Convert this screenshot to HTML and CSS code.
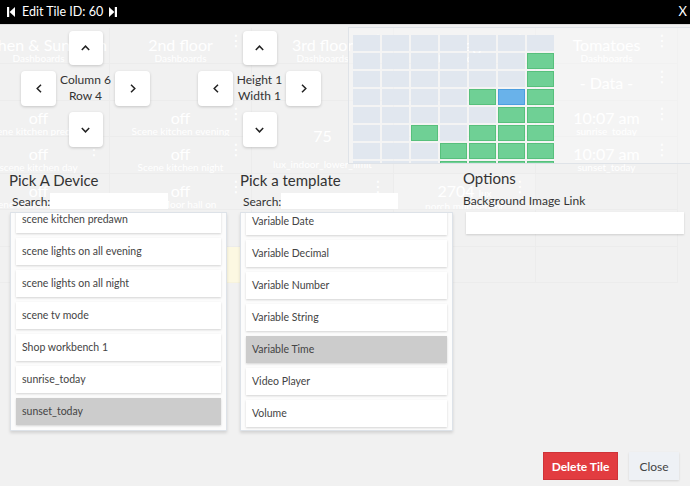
FILE: index.html
```html
<!DOCTYPE html>
<html lang="en">
<head>
<meta charset="utf-8">
<title>Edit Tile</title>
<link rel="stylesheet" href="styles.css">
</head>
<body>
<div class="stage">
  <div class="dash">
    <div class="tile"><div class="t-title">Kitchen &amp; Sunroom</div><div class="t-sub">Dashboards</div><span class="kebab">⋮</span></div>
    <div class="tile"><div class="t-title">2nd floor</div><div class="t-sub">Dashboards</div><span class="kebab">⋮</span></div>
    <div class="tile"><div class="t-title">3rd floor</div><div class="t-sub">Dashboards</div><span class="kebab">⋮</span></div>
    <div class="tile"><div class="t-title">Garage</div><div class="t-sub">Dashboards</div><span class="kebab">⋮</span></div>
    <div class="tile"><div class="t-title">Tomatoes</div><div class="t-sub">Dashboards</div><span class="kebab">⋮</span></div>

    <div class="tile"></div>
    <div class="tile"></div>
    <div class="tile"></div>
    <div class="tile"></div>
    <div class="tile tile-single"><div class="t-title">- Data -</div><span class="kebab">⋮</span></div>

    <div class="tile"><div class="t-title">off</div><div class="t-sub">scene kitchen predawn</div></div>
    <div class="tile"><div class="t-title">off</div><div class="t-sub">Scene kitchen evening</div><span class="kebab">⋮</span></div>
    <div class="tile tile-tall"><div class="t-title">75</div><div class="t-sub">lux_indoor_lower_limit</div></div>
    <div class="tile"></div>
    <div class="tile"><div class="t-title">10:07 am</div><div class="t-sub">sunrise_today</div><span class="kebab">⋮</span></div>

    <div class="tile"><div class="t-title">off</div><div class="t-sub">scene kitchen day</div><span class="kebab">⋮</span></div>
    <div class="tile"><div class="t-title">off</div><div class="t-sub">Scene kitchen night</div><span class="kebab">⋮</span></div>
    <div class="tile"></div>
    <div class="tile"><div class="t-title">10:07 am</div><div class="t-sub">sunset_today</div><span class="kebab">⋮</span></div>

    <div class="tile"><div class="t-title">off</div><div class="t-sub">scene kitchen morning</div></div>
    <div class="tile"><div class="t-title">off</div><div class="t-sub">2nd floor hall on</div><span class="kebab">⋮</span></div>
    <div class="tile"><span class="kebab">⋮</span></div>
    <div class="tile tile-light"><div class="t-title">2704 <small>lux</small></div><div class="t-sub">porch multisensor</div><span class="kebab">⋮</span></div>
    <div class="tile"></div>

    <div class="tile"></div>
    <div class="tile"></div>
    <div class="tile"></div>
    <div class="tile"></div>
    <div class="tile"></div>

    <div class="tile"></div>
    <div class="tile tile-yellow"></div>
    <div class="tile"></div>
    <div class="tile"></div>
    <div class="tile"></div>
  </div>

  <div class="modal">
    <header class="bar">
      <div class="bar-title">
        <svg class="nav-icon" width="8" height="10" viewBox="0 0 8 10"><rect x="0" y="0" width="2.2" height="10" fill="#fff"/><polygon points="8,0 2.6,5 8,10" fill="#fff"/></svg>
        <span>Edit Tile ID: 60</span>
        <svg class="nav-icon" width="8" height="10" viewBox="0 0 8 10"><polygon points="0,0 5.4,5 0,10" fill="#fff"/><rect x="5.8" y="0" width="2.2" height="10" fill="#fff"/></svg>
      </div>
      <span class="bar-close">X</span>
    </header>

    <section class="top">
      <div class="pad pad-pos">
        <button class="arrow a-up"><svg width="9" height="6" viewBox="0 0 9 6"><polyline points="0.8,5 4.5,1.2 8.2,5" fill="none" stroke="#222" stroke-width="1.5"/></svg></button>
        <button class="arrow a-left"><svg width="6" height="9" viewBox="0 0 6 9"><polyline points="5,0.8 1.2,4.5 5,8.2" fill="none" stroke="#222" stroke-width="1.5"/></svg></button>
        <div class="pad-label">Column 6<br>Row 4</div>
        <button class="arrow a-right"><svg width="6" height="9" viewBox="0 0 6 9"><polyline points="1,0.8 4.8,4.5 1,8.2" fill="none" stroke="#222" stroke-width="1.5"/></svg></button>
        <button class="arrow a-down"><svg width="9" height="6" viewBox="0 0 9 6"><polyline points="0.8,1 4.5,4.8 8.2,1" fill="none" stroke="#222" stroke-width="1.5"/></svg></button>
      </div>
      <div class="pad pad-size">
        <button class="arrow a-up"><svg width="9" height="6" viewBox="0 0 9 6"><polyline points="0.8,5 4.5,1.2 8.2,5" fill="none" stroke="#222" stroke-width="1.5"/></svg></button>
        <button class="arrow a-left"><svg width="6" height="9" viewBox="0 0 6 9"><polyline points="5,0.8 1.2,4.5 5,8.2" fill="none" stroke="#222" stroke-width="1.5"/></svg></button>
        <div class="pad-label">Height 1<br>Width 1</div>
        <button class="arrow a-right"><svg width="6" height="9" viewBox="0 0 6 9"><polyline points="1,0.8 4.8,4.5 1,8.2" fill="none" stroke="#222" stroke-width="1.5"/></svg></button>
        <button class="arrow a-down"><svg width="9" height="6" viewBox="0 0 9 6"><polyline points="0.8,1 4.5,4.8 8.2,1" fill="none" stroke="#222" stroke-width="1.5"/></svg></button>
      </div>
      <div class="grid-panel">
        <div class="cells">
          <i class="c"></i><i class="c"></i><i class="c"></i><i class="c"></i><i class="c"></i><i class="c"></i><i class="c"></i>
          <i class="c"></i><i class="c"></i><i class="c"></i><i class="c"></i><i class="c"></i><i class="c"></i><i class="c g"></i>
          <i class="c"></i><i class="c"></i><i class="c"></i><i class="c"></i><i class="c"></i><i class="c"></i><i class="c g"></i>
          <i class="c"></i><i class="c"></i><i class="c"></i><i class="c"></i><i class="c g"></i><i class="c b"></i><i class="c g"></i>
          <i class="c"></i><i class="c"></i><i class="c"></i><i class="c"></i><i class="c"></i><i class="c g"></i><i class="c g"></i>
          <i class="c"></i><i class="c"></i><i class="c g"></i><i class="c"></i><i class="c g"></i><i class="c g"></i><i class="c g"></i>
          <i class="c"></i><i class="c"></i><i class="c"></i><i class="c g"></i><i class="c g"></i><i class="c g"></i><i class="c g"></i>
          <i class="c"></i><i class="c"></i><i class="c"></i><i class="c g"></i><i class="c g"></i><i class="c g"></i><i class="c g"></i>
        </div>
      </div>
    </section>

    <section class="pickers">
      <div class="col col-device">
        <h2 class="col-title">Pick A Device</h2>
        <label class="search"><span class="search-label">Search:</span><input class="search-input" type="text"></label>
        <div class="panel">
          <ul class="list list-device">
            <li class="item">scene kitchen predawn</li>
            <li class="item">scene lights on all evening</li>
            <li class="item">scene lights on all night</li>
            <li class="item">scene tv mode</li>
            <li class="item">Shop workbench 1</li>
            <li class="item">sunrise_today</li>
            <li class="item item-selected">sunset_today</li>
          </ul>
        </div>
      </div>
      <div class="col col-template">
        <h2 class="col-title">Pick a template</h2>
        <label class="search"><span class="search-label">Search:</span><input class="search-input" type="text"></label>
        <div class="panel">
          <ul class="list list-template">
            <li class="item">Variable Date</li>
            <li class="item">Variable Decimal</li>
            <li class="item">Variable Number</li>
            <li class="item">Variable String</li>
            <li class="item item-selected">Variable Time</li>
            <li class="item">Video Player</li>
            <li class="item">Volume</li>
          </ul>
        </div>
      </div>
      <div class="col col-options">
        <h2 class="col-title col-title-options">Options</h2>
        <div class="opt-label">Background Image Link</div>
        <input class="opt-input" type="text">
      </div>
    </section>

    <footer class="foot">
      <button class="btn btn-delete">Delete Tile</button>
      <button class="btn btn-close">Close</button>
    </footer>
  </div>
</div>
</body>
</html>
```

FILE: styles.css
```css
* { box-sizing: border-box; }

html, body {
  margin: 0;
  padding: 0;
}

body {
  width: 690px;
  height: 486px;
  overflow: hidden;
  background: #f1f1f1;
  font-family: "Lato", "Noto Sans", sans-serif;
  color: #333;
}

.stage {
  display: grid;
  grid-template-columns: 690px;
  grid-template-rows: 486px;
  width: 690px;
  height: 486px;
  overflow: hidden;
}

.dash, .modal {
  grid-area: 1 / 1;
  min-width: 0;
}

/* ---------- faded dashboard behind the dialog ---------- */
.dash {
  display: grid;
  grid-template-columns: repeat(5, 142px);
  grid-auto-rows: 36.5px;
  margin-left: -32px;
  padding-top: 27.5px;
  width: 740px;
  align-content: start;
}

.tile {
  position: relative;
  text-align: center;
  color: #fff;
  padding-top: 8px;
  border-right: 1px solid rgba(0, 0, 0, 0.018);
  border-bottom: 1px solid rgba(0, 0, 0, 0.018);
  white-space: nowrap;
  overflow: hidden;
}

.tile-single { padding-top: 10px; }
.tile-tall { grid-row: span 2; padding-top: 26px; }
.tile-tall .t-sub { margin-top: 13px; }
.tile-light { background: rgba(255, 255, 255, 0.18); }
.tile-yellow { background: #fcf8e2; }

.t-title {
  font-size: 16px;
  line-height: 18px;
}

.t-title small { font-size: 10px; }

.t-sub {
  font-size: 10px;
  line-height: 12px;
  margin-top: -2px;
}

.kebab {
  position: absolute;
  right: 7px;
  top: 4px;
  font-size: 16px;
  line-height: 18px;
  font-family: "DejaVu Sans", sans-serif;
  color: #fff;
}

/* ---------- dialog ---------- */
.modal {
  position: relative;
  z-index: 1;
  display: flex;
  flex-direction: column;
  width: 690px;
  height: 486px;
}

.bar {
  height: 25px;
  background: #000;
  border-bottom: 1px solid #dcdcdc;
  display: flex;
  align-items: center;
  justify-content: space-between;
  padding: 0 3px 2px 7px;
  color: #fff;
}

.bar-title {
  display: flex;
  align-items: center;
  font-size: 12.5px;
}

.bar-title span { margin: 0 6px 0 7px; }

.nav-icon { display: block; margin-top: 1px; }

.bar-close {
  font-size: 13px;
}

/* top row: position / size pads and the grid */
.top {
  display: flex;
  align-items: flex-start;
  height: 139px;
  padding-left: 21px;
}

.pad {
  display: grid;
  grid-template-rows: 34px 35px 35px;
  row-gap: 6px;
  margin-top: 6px;
}

.pad-pos { grid-template-columns: 35px 59px 35px; }
.pad-size { grid-template-columns: 35px 53px 35px; margin-left: 48px; }

.arrow {
  display: flex;
  align-items: center;
  justify-content: center;
  border: none;
  padding: 0;
  background: #fff;
  border-radius: 4px;
  box-shadow: 0 1px 3px rgba(0, 0, 0, 0.18);
  width: 35px;
  height: 35px;
}

.a-up { grid-column: 2; grid-row: 1; justify-self: center; width: 34px; height: 34px; }
.a-left { grid-column: 1; grid-row: 2; }
.a-right { grid-column: 3; grid-row: 2; }
.a-down { grid-column: 2; grid-row: 3; justify-self: center; width: 34px; }

.pad-label {
  grid-column: 2;
  grid-row: 2;
  text-align: center;
  font-size: 12px;
  line-height: 16px;
  padding-top: 1px;
  color: #333;
  white-space: nowrap;
  justify-self: center;
}

.grid-panel {
  flex: 1;
  margin-left: 27px;
  margin-top: 2px;
  height: 137px;
  border: 1px solid #dfe3e8;
  border-right: none;
  background: rgba(255, 255, 255, 0.25);
  padding: 7px 0 0 4px;
  overflow: hidden;
}

.cells {
  display: grid;
  grid-template-columns: repeat(7, 27px);
  grid-auto-rows: 16px;
  gap: 2px;
}

.c {
  display: block;
  background: #e1e7ef;
}

.c.g {
  background: #6fd095;
  border: 1px solid #57c07c;
}

.c.b {
  background: #69b2ea;
  border: 1px solid #4c9ee0;
}

/* pickers */
.pickers {
  display: flex;
  align-items: flex-start;
  padding-left: 9px;
}

.col { display: flex; flex-direction: column; }
.col-device { width: 218px; }
.col-template { width: 213px; margin-left: 13px; }
.col-options { width: 221px; margin-left: 10px; }

.col-title {
  margin: 7px 0 0;
  font-size: 15px;
  line-height: 18px;
  font-weight: 400;
  color: #333;
}

.col-title-options { margin-top: 5px; }

.search {
  display: flex;
  align-items: center;
  margin: 4px 0 0 3px;
  height: 16px;
  font-size: 12px;
  color: #333;
}

.search-label { width: 35px; white-space: nowrap; }

.search-input {
  margin-left: 3px;
  height: 16px;
  border: none;
  background: #fff;
  padding: 0;
}

.col-device .search-input { width: 118px; }
.col-template .search-input { width: 117px; }

.panel {
  margin-top: 3px;
  height: 219px;
  border: 1px solid #dde2e8;
  background: #fcfcfc;
  box-shadow: 0 2px 3px rgba(0, 0, 0, 0.13);
  padding: 0 5px;
  overflow: hidden;
}

.col-device .panel { margin-left: 1px; }

.list {
  list-style: none;
  margin: 0;
  padding: 0;
  display: flex;
  flex-direction: column;
  gap: 5px;
}

.list-device { margin-top: -7px; }
.list-template { margin-top: -5px; }

.item {
  height: 27px;
  line-height: 27px;
  padding-left: 6px;
  background: #fff;
  box-shadow: 0 1px 2px rgba(0, 0, 0, 0.16);
  font-size: 10.5px;
  color: #444;
  white-space: nowrap;
}

.item-selected { background: #cccccc; }

.opt-label {
  margin-top: 7px;
  font-size: 12px;
  line-height: 14px;
  color: #333;
}

.opt-input {
  margin: 4px 0 0 3px;
  width: 218px;
  height: 22px;
  border: none;
  background: #fff;
  box-shadow: 0 1px 2px rgba(0, 0, 0, 0.15);
  padding: 0;
}

/* footer */
.foot {
  margin-top: auto;
  display: flex;
  justify-content: flex-end;
  gap: 11px;
  padding: 0 11px 6px 0;
}

.btn {
  height: 28px;
  border: none;
  font-family: "Lato", "Noto Sans", sans-serif;
  font-size: 12px;
  padding: 0;
}

.btn-delete {
  width: 75px;
  background: #e23c40;
  border: 1px solid #cf3338;
  color: #fff;
  font-weight: 700;
}

.btn-close {
  width: 50px;
  background: #eef1f5;
  color: #444;
  box-shadow: 0 1px 2px rgba(0, 0, 0, 0.12);
}
```
